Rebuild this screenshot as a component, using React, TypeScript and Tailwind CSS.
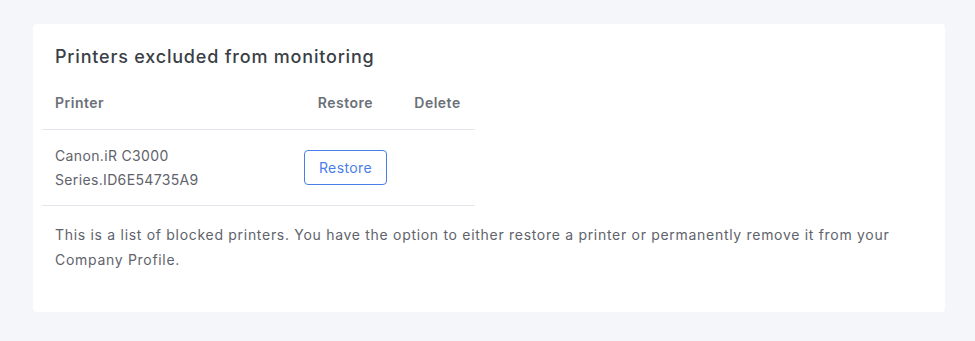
const rows = [{ name: "Canon.iR C3000", serial: "Series.ID6E54735A9" }];

const App = () => {
  return (
    <div className="min-h-[341px] bg-[#f5f6fa] pl-[33px] pr-[30px] pt-[24px] font-['Inter',sans-serif]">
      <div className="h-[288px] rounded-[4px] bg-white px-[9px] pt-[20px]">
        <h2 className="px-[13px] text-[18px] leading-[26px] font-medium tracking-[0.8px] text-[#3a3f47]">
          Printers excluded from monitoring
        </h2>

        <table className="mt-[6px] w-[433px] border-collapse text-[14px] text-[#5f636b]">
          <thead>
            <tr className="h-[53px] border-b border-[#e3e7ec] text-left tracking-[0.5px] text-[#6b7078]">
              <th className="w-[249px] px-[13px] font-semibold">Printer</th>
              <th className="w-[109px] px-[13px] text-center font-semibold">Restore</th>
              <th className="px-[13px] text-center font-semibold">Delete</th>
            </tr>
          </thead>
          <tbody>
            {rows.map((r) => (
              <tr key={r.serial} className="h-[76px] border-b border-[#e3e7ec]">
                <td className="px-[13px] pt-[1px] leading-[24px] tracking-[0.35px]">
                  {r.name}
                  <br />
                  {r.serial}
                </td>
                <td className="px-[13px] text-center">
                  <button className="h-[35px] w-[83px] rounded-[4px] border border-[#4a7ee8] text-[14px] tracking-[0.4px] text-[#4a7ee8]">
                    Restore
                  </button>
                </td>
                <td className="px-[13px]"></td>
              </tr>
            ))}
          </tbody>
        </table>

        <p className="mt-[16px] px-[13px] text-[14px] leading-[25px] tracking-[0.7px] text-[#5f636b]">
          This is a list of blocked printers. You have the option to either restore a printer or permanently remove it from your
          <br />
          Company Profile.
        </p>
      </div>
    </div>
  );
};

export default App;
